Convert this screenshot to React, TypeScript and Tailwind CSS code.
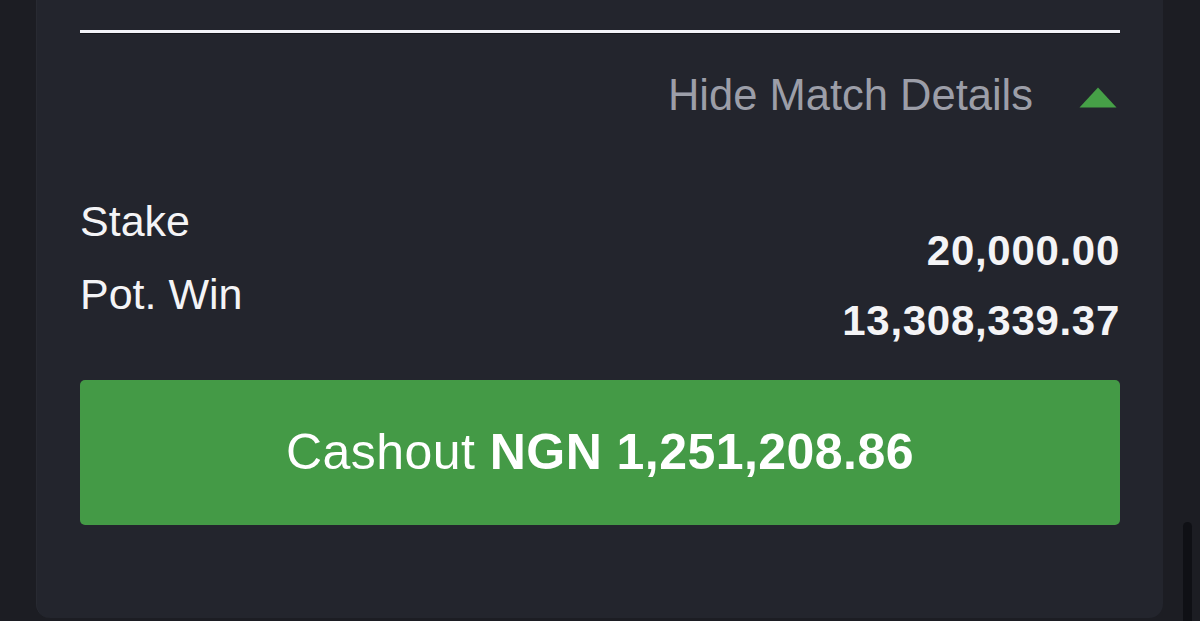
import React from "react";

const sans = "font-['Liberation_Sans',Arial,sans-serif]";

function ArrowUp() {
  return (
    <svg width="38" height="21" viewBox="0 0 38 21" className="mt-[5px] mr-[3px]">
      <polygon points="19,0.5 37.5,20.5 0.5,20.5" fill="#46a047" />
    </svg>
  );
}

export default function App() {
  return (
    <div className={`relative flex h-[621px] w-[1200px] overflow-hidden bg-[#1c1d23] ${sans}`}>
      <div className="w-[36px] shrink-0" />
      <div className="flex h-[618px] w-[1127px] flex-col rounded-b-[14px] border-l border-[#282a32] bg-[#23252d] pl-[43px] pr-[43px]">
        <div className="mt-[30px] h-[2.5px] bg-[#f2f3f8] shadow-[0_1px_0_#15161b]" />

        <div className="mt-[32px] flex h-[60px] items-center justify-end gap-[46px]">
          <span className="text-[43.5px] leading-[60px] text-[#9c9ea8]">Hide Match Details</span>
          <ArrowUp />
        </div>

        <div className="mt-[60px] flex justify-between">
          <div className="flex flex-col text-[43px] leading-[73px] text-[#f4f4f6]">
            <span>Stake</span>
            <span>Pot. Win</span>
          </div>
          <div className="flex flex-col items-end pt-[31px] text-[42px] font-bold leading-[70px] tracking-[0.7px] text-[#f4f4f6]">
            <span>20,000.00</span>
            <span>13,308,339.37</span>
          </div>
        </div>

        <button
          type="button"
          className="mt-[24px] flex h-[145px] items-center justify-center rounded-[5px] bg-[#449a46] text-[50px] tracking-[0.45px] text-white"
        >
          Cashout&nbsp;<span className="font-bold">NGN 1,251,208.86</span>
        </button>
      </div>

      {/* scrollbar thumb */}
      <div className="absolute left-[1183px] top-[522px] h-[110px] w-[9px] rounded-full bg-[#0f1015]" />
    </div>
  );
}
